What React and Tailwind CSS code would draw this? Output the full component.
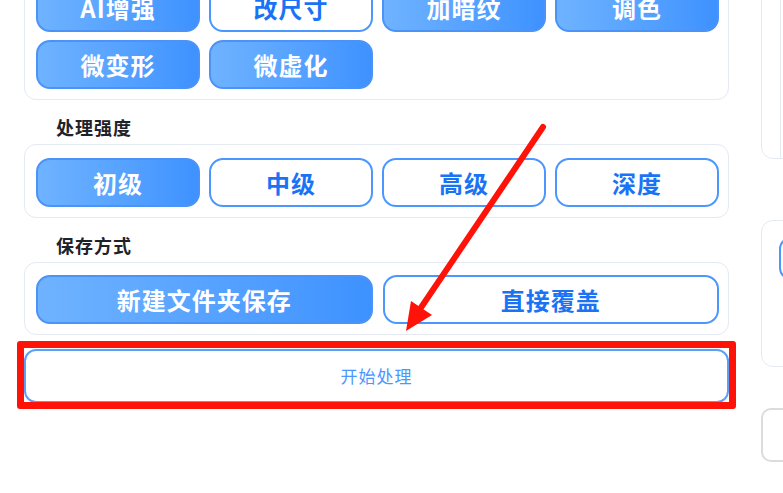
import React from "react";

const font = { fontFamily: '"Noto Sans CJK SC", "Noto Sans", sans-serif' };

const Option = ({ label, active }) => (
  <button
    className={
      active
        ? "h-[49px] rounded-[14px] border-2 border-[#4b93f7] bg-gradient-to-r from-[#6fb3ff] to-[#3e92ff] text-white text-[24px] leading-none font-bold tracking-[1px]"
        : "h-[49px] rounded-[14px] border-2 border-[#4b97ff] bg-white text-[#1a73f5] text-[24px] leading-none font-bold tracking-[1px]"
    }
  >
    {label}
  </button>
);

const Card = ({ children, className }) => (
  <div className={`rounded-[12px] border border-[#e4e9f2] bg-white pl-[11px] pr-[9px] pb-[10px] ${className}`}>
    {children}
  </div>
);

const Label = ({ children }) => (
  <div className="pl-[32px] pt-[17px] pb-[7px] text-[18px] leading-[20px] font-bold tracking-[1px] text-[#1f2329]">
    {children}
  </div>
);

export default function App() {
  return (
    <div className="relative w-[783px] h-[493px] overflow-hidden bg-white" style={font}>
      <div className="flex gap-[32px] mt-[-30px]">
        {/* left settings column */}
        <div className="ml-[24px] w-[705px] shrink-0 flex flex-col">
          <Card className="pt-[12px]">
            <div className="grid grid-cols-4 gap-x-[9px] gap-y-[8px]">
              <Option label="AI增强" active />
              <Option label="改尺寸" />
              <Option label="加暗纹" active />
              <Option label="调色" active />
              <Option label="微变形" active />
              <Option label="微虚化" active />
            </div>
          </Card>

          <Label>处理强度</Label>
          <Card className="pt-[13px]">
            <div className="grid grid-cols-4 gap-x-[9px]">
              <Option label="初级" active />
              <Option label="中级" />
              <Option label="高级" />
              <Option label="深度" />
            </div>
          </Card>

          <Label>保存方式</Label>
          <Card className="pt-[12px]">
            <div className="grid grid-cols-2 gap-x-[10px]">
              <Option label="新建文件夹保存" active />
              <Option label="直接覆盖" />
            </div>
          </Card>

          <div className="relative mt-[14px]">
            <button className="w-full h-[54px] rounded-[12px] border-2 border-[#5c9ffb] bg-white text-[17px] tracking-[1px] text-[#4a97ff]">
              开始处理
            </button>
            {/* annotation box */}
            <div className="absolute -top-[8px] -bottom-[6px] -left-[7px] -right-[7px] rounded-[3px] border-[7px] border-[#ff1208] pointer-events-none" />
          </div>
        </div>

        {/* right column, mostly cut off */}
        <div className="w-[200px] shrink-0 flex flex-col">
          <div className="h-[189px] rounded-[12px] border border-[#e4e9f2] flex justify-end">
            <div className="w-[180px] border-l border-[#e4e9f2]" />
          </div>
          <div className="mt-[61px] h-[147px] rounded-[12px] border border-[#e4e9f2] pl-[17px] pt-[16px]">
            <div className="h-[43px] rounded-[12px] border-2 border-[#4b97ff]" />
          </div>
          <div className="mt-[41px] h-[54px] rounded-[10px] border-2 border-[#dcdcdc]" />
        </div>
      </div>

      {/* annotation arrow */}
      <svg className="absolute inset-0 pointer-events-none" width="783" height="493">
        <line x1="543" y1="127" x2="418" y2="312" stroke="#ff1208" strokeWidth="6" strokeLinecap="round" />
        <polygon points="406,331 411,301 432,315" fill="#ff1208" />
      </svg>
    </div>
  );
}
